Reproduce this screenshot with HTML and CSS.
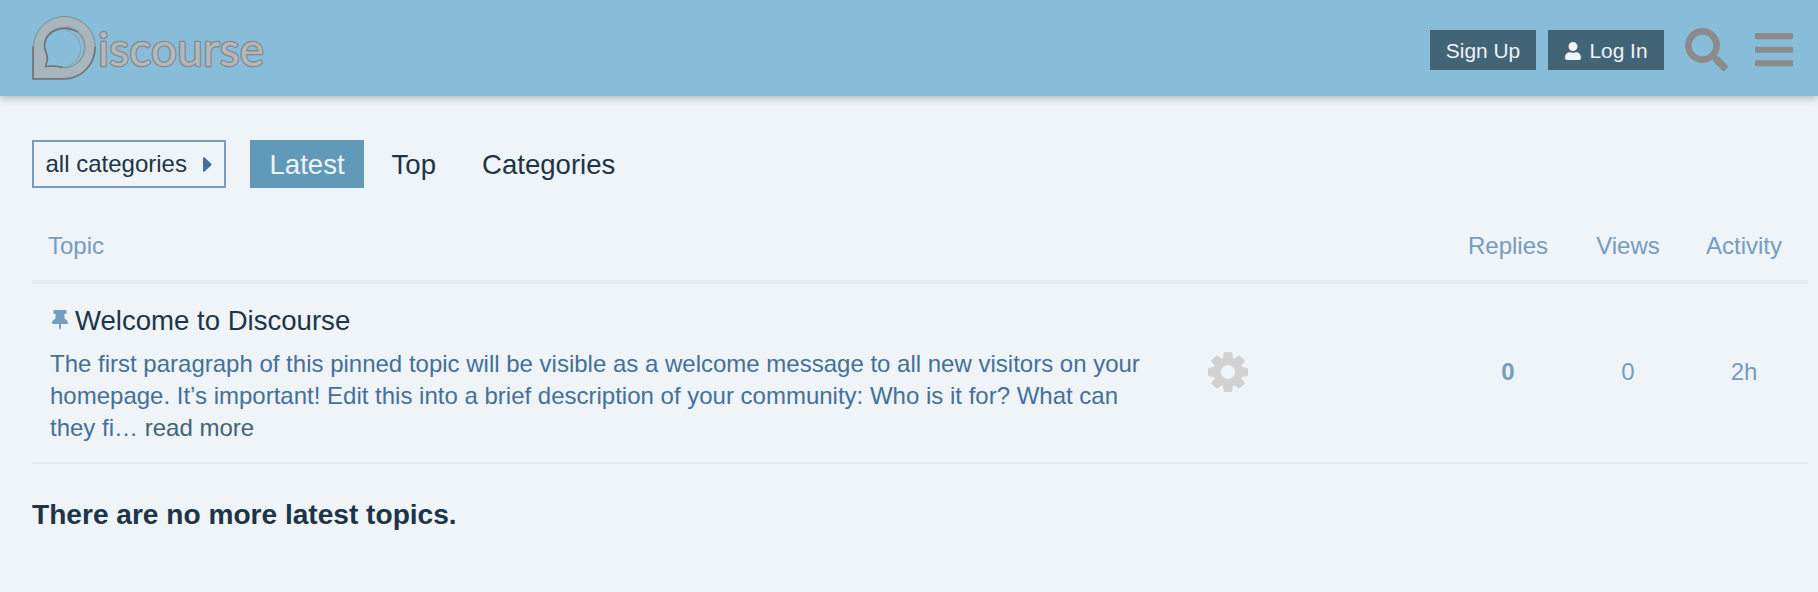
FILE: index.html
```html
<!DOCTYPE html>
<html lang="en">
<head>
<meta charset="utf-8">
<title>Discourse</title>
<link rel="stylesheet" href="styles.css">
</head>
<body>
<header class="header">
  <svg class="logo" viewBox="0 0 240 70" role="img" aria-label="Discourse">
    <defs>
      <pattern id="scratch" width="13" height="7" patternUnits="userSpaceOnUse" patternTransform="rotate(-50)">
        <rect width="13" height="7" fill="#aeb4b8"/>
        <path d="M0 1.500H8M4 4.500H13M1 6.300H5" stroke="#8bbcd7" stroke-width=".8"/>
      </pattern>
    </defs>
    <path d="M2.500 66.500V34.500A31 31 0 1 1 33.500 66.500Z M14 55C16 49 17 46 14.500 40C10 27 19 15.500 33 15.500A20 20 0 0 1 34 55.500C28 55.500 25 53 14 55Z" fill="url(#scratch)" fill-rule="evenodd" stroke="#85898b" stroke-width="1"/>
    <path d="M2 34V67H33C50 67 64 53 64 35" fill="none" stroke="#707476" stroke-width="1.600"/>
    <path d="M47 20C30 10 8 22 15 40C18 47 16 49 14.500 54.500C25 53 26 55 32 55" fill="none" stroke="#707476" stroke-width="1.500"/>
    <path d="M34 18A18.500 18.500 0 0 1 38 53.500M35 14A21 21 0 0 1 47 51" fill="none" stroke="#8b9397" stroke-width=".7"/>
    <text class="logo-text" x="67" y="54" textLength="166" lengthAdjust="spacing">iscourse</text>
  </svg>
  <div class="panel">
    <button class="btn">Sign Up</button>
    <button class="btn"><svg class="user" viewBox="0 0 448 512"><path d="M224 256c70.700 0 128-57.300 128-128S294.700 0 224 0 96 57.300 96 128s57.300 128 128 128zm89.600 32h-16.700c-22.200 10.200-46.900 16-72.900 16s-50.600-5.800-72.900-16h-16.700C60.200 288 0 348.200 0 422.400V464c0 26.500 21.500 48 48 48h352c26.500 0 48-21.500 48-48v-41.600c0-74.200-60.200-134.400-134.400-134.400z"/></svg>Log In</button>
    <svg class="search" viewBox="0 0 512 512"><path d="M505 442.700L405.300 343c-4.500-4.500-10.600-7-17-7H372c27.600-35.300 44-79.700 44-128C416 93.100 322.900 0 208 0S0 93.100 0 208s93.100 208 208 208c48.300 0 92.700-16.400 128-44v16.300c0 6.400 2.500 12.500 7 17l99.700 99.700c9.400 9.400 24.600 9.400 33.900 0l28.300-28.300c9.400-9.400 9.400-24.600.1-34zM208 336c-70.700 0-128-57.200-128-128 0-70.700 57.200-128 128-128 70.700 0 128 57.200 128 128 0 70.700-57.200 128-128 128z"/></svg>
    <svg class="bars" viewBox="0 0 448 512"><path d="M16 132h416c8.837 0 16-7.163 16-16V76c0-8.837-7.163-16-16-16H16C7.163 60 0 67.163 0 76v40c0 8.837 7.163 16 16 16zm0 160h416c8.837 0 16-7.163 16-16v-40c0-8.837-7.163-16-16-16H16c-8.837 0-16 7.163-16 16v40c0 8.837 7.163 16 16 16zm0 160h416c8.837 0 16-7.163 16-16v-40c0-8.837-7.163-16-16-16H16c-8.837 0-16 7.163-16 16v40c0 8.837 7.163 16 16 16z"/></svg>
  </div>
</header>
<main class="main">
  <nav class="nav">
    <div class="dropdown">all categories<svg class="caret" viewBox="0 0 9 15"><path d="M0 1.300C0 0 1 0 1.700.6L8 6.500Q9 7.500 8 8.500L1.700 14.400C1 15 0 15 0 13.700Z"/></svg></div>
    <a class="pill active">Latest</a>
    <a class="pill">Top</a>
    <a class="pill">Categories</a>
  </nav>
  <section class="topics">
    <div class="row head">
      <span class="topic">Topic</span><span class="posters"></span><span>Replies</span><span>Views</span><span>Activity</span>
    </div>
    <div class="row item">
      <div class="topic">
        <div class="title"><svg class="pin" viewBox="0 0 16 20"><path d="M2.200 0H13.800Q14.500 0 14.500.7V3.300Q14.500 4 13.800 4H12.200L12.700 8.800C14.500 9.700 16 11.200 16 13Q16 14 15 14H9V18L8 20L7 18V14H1Q0 14 0 13C0 11.200 1.500 9.700 3.300 8.800L3.800 4H2.200Q1.500 4 1.500 3.300V.7Q1.500 0 2.200 0Z"/></svg>Welcome to Discourse</div>
        <p class="excerpt">The first paragraph of this pinned topic will be visible as a welcome message to all new visitors on your homepage. It’s important! Edit this into a brief description of your community: Who is it for? What can they fi… <a class="more">read more</a></p>
      </div>
      <div class="posters"><svg class="cog" viewBox="-20 -20 40 40"><defs><path id="tooth" d="M-6.500-12C-5-14-4.500-15.500-4.300-18.500Q-4.200-20-2.800-20H2.800Q4.200-20 4.300-18.500C4.500-15.500 5-14 6.500-12Z"/></defs><circle r="10.700"/><use href="#tooth"/><use href="#tooth" transform="rotate(45)"/><use href="#tooth" transform="rotate(90)"/><use href="#tooth" transform="rotate(135)"/><use href="#tooth" transform="rotate(180)"/><use href="#tooth" transform="rotate(225)"/><use href="#tooth" transform="rotate(270)"/><use href="#tooth" transform="rotate(315)"/></svg></div>
      <b>0</b><span>0</span><span>2h</span>
    </div>
  </section>
  <h3 class="footer-message">There are no more latest topics.</h3>
</main>
</body>
</html>
```
FILE: styles.css
```css
* { box-sizing: border-box; }
body {
  margin: 0;
  height: 592px;
  overflow: hidden;
  background: #eef4f8;
  color: #203447;
  font: 24px/32px "Liberation Sans", Arial, sans-serif;
}
svg { display: block; flex: none; }
.header {
  height: 96px;
  padding: 0 25px 0 31px;
  display: flex;
  align-items: center;
  justify-content: space-between;
  background: #88bdda;
  box-shadow: 0 2px 8px rgba(0, 0, 0, .27);
}
.logo { width: 240px; height: 70px; margin-bottom: 2px; overflow: visible; }
.logo-text {
  font: 400 46px/1 Lato, sans-serif;
  fill: #b4b8bb;
  stroke: #84898c;
  stroke-width: 2.6px;
  stroke-linejoin: round;
  paint-order: stroke;
}
.panel { display: flex; align-items: center; padding-top: 4px; }
.btn {
  display: flex;
  align-items: center;
  justify-content: center;
  width: 106px;
  height: 40px;
  padding: 2px 0 0;
  border: 0;
  margin-right: 12px;
  background: #436376;
  color: #eef4f8;
  font: 20.9px/30px "Liberation Sans", Arial, sans-serif;
}
.btn + .btn { width: 116px; margin-right: 20.500px; padding-left: 1px; }
.user { width: 16px; height: 18px; margin-right: 8px; fill: #eef4f8; }
.search, .bars { fill: #8b8b8b; }
.search { width: 43px; height: 43px; margin-right: 27.500px; }
.bars { width: 38px; height: 43.400px; }
.main { padding: 44px 10px 0 32px; }
.nav { display: flex; height: 48px; font-size: 27.57px; }
.dropdown {
  display: flex;
  align-items: center;
  justify-content: space-between;
  width: 194px;
  margin-right: 24px;
  padding: 0 12px 0 11.500px;
  border: 2px solid #769cc0;
  font-size: 24px;
}
.caret { width: 9px; height: 15px; fill: #466f9a; }
.pill { padding: 9px 19.500px 7px; margin-right: 7px; }
.active { margin-right: 8px; background: #6199b9; color: #eef4f8; }
.row {
  display: grid;
  grid-template-columns: 1168px 248px 120px 120px 112px;
  text-align: center;
  align-items: center;
  color: #769cc0;
}
.topic { text-align: left; padding-left: 18px; }
.head { height: 96px; padding-top: 24px; border-bottom: 4px solid #e2eaf2; }
.head .topic { padding-left: 16px; }
.item { height: 180px; padding-bottom: 2px; border-bottom: 2px solid #e2eaf2; }
.item .topic { padding-top: 4px; }
.title { display: flex; align-items: center; font-size: 27.57px; color: #203447; }
.pin { width: 16px; height: 20px; margin: 0 7px 2px 2px; fill: #769cc0; }
.excerpt { width: 1110px; margin: 11px 0 0; color: #466f9a; }
.more { color: #436376; }
.cog { width: 40px; height: 40px; margin-left: 8px; fill: #d2d2d2; }
.cog circle { fill: none; stroke: #d2d2d2; stroke-width: 7.400px; }
.footer-message { margin: 34px 0 0; font-size: 28.1px; line-height: 34px; }
```
